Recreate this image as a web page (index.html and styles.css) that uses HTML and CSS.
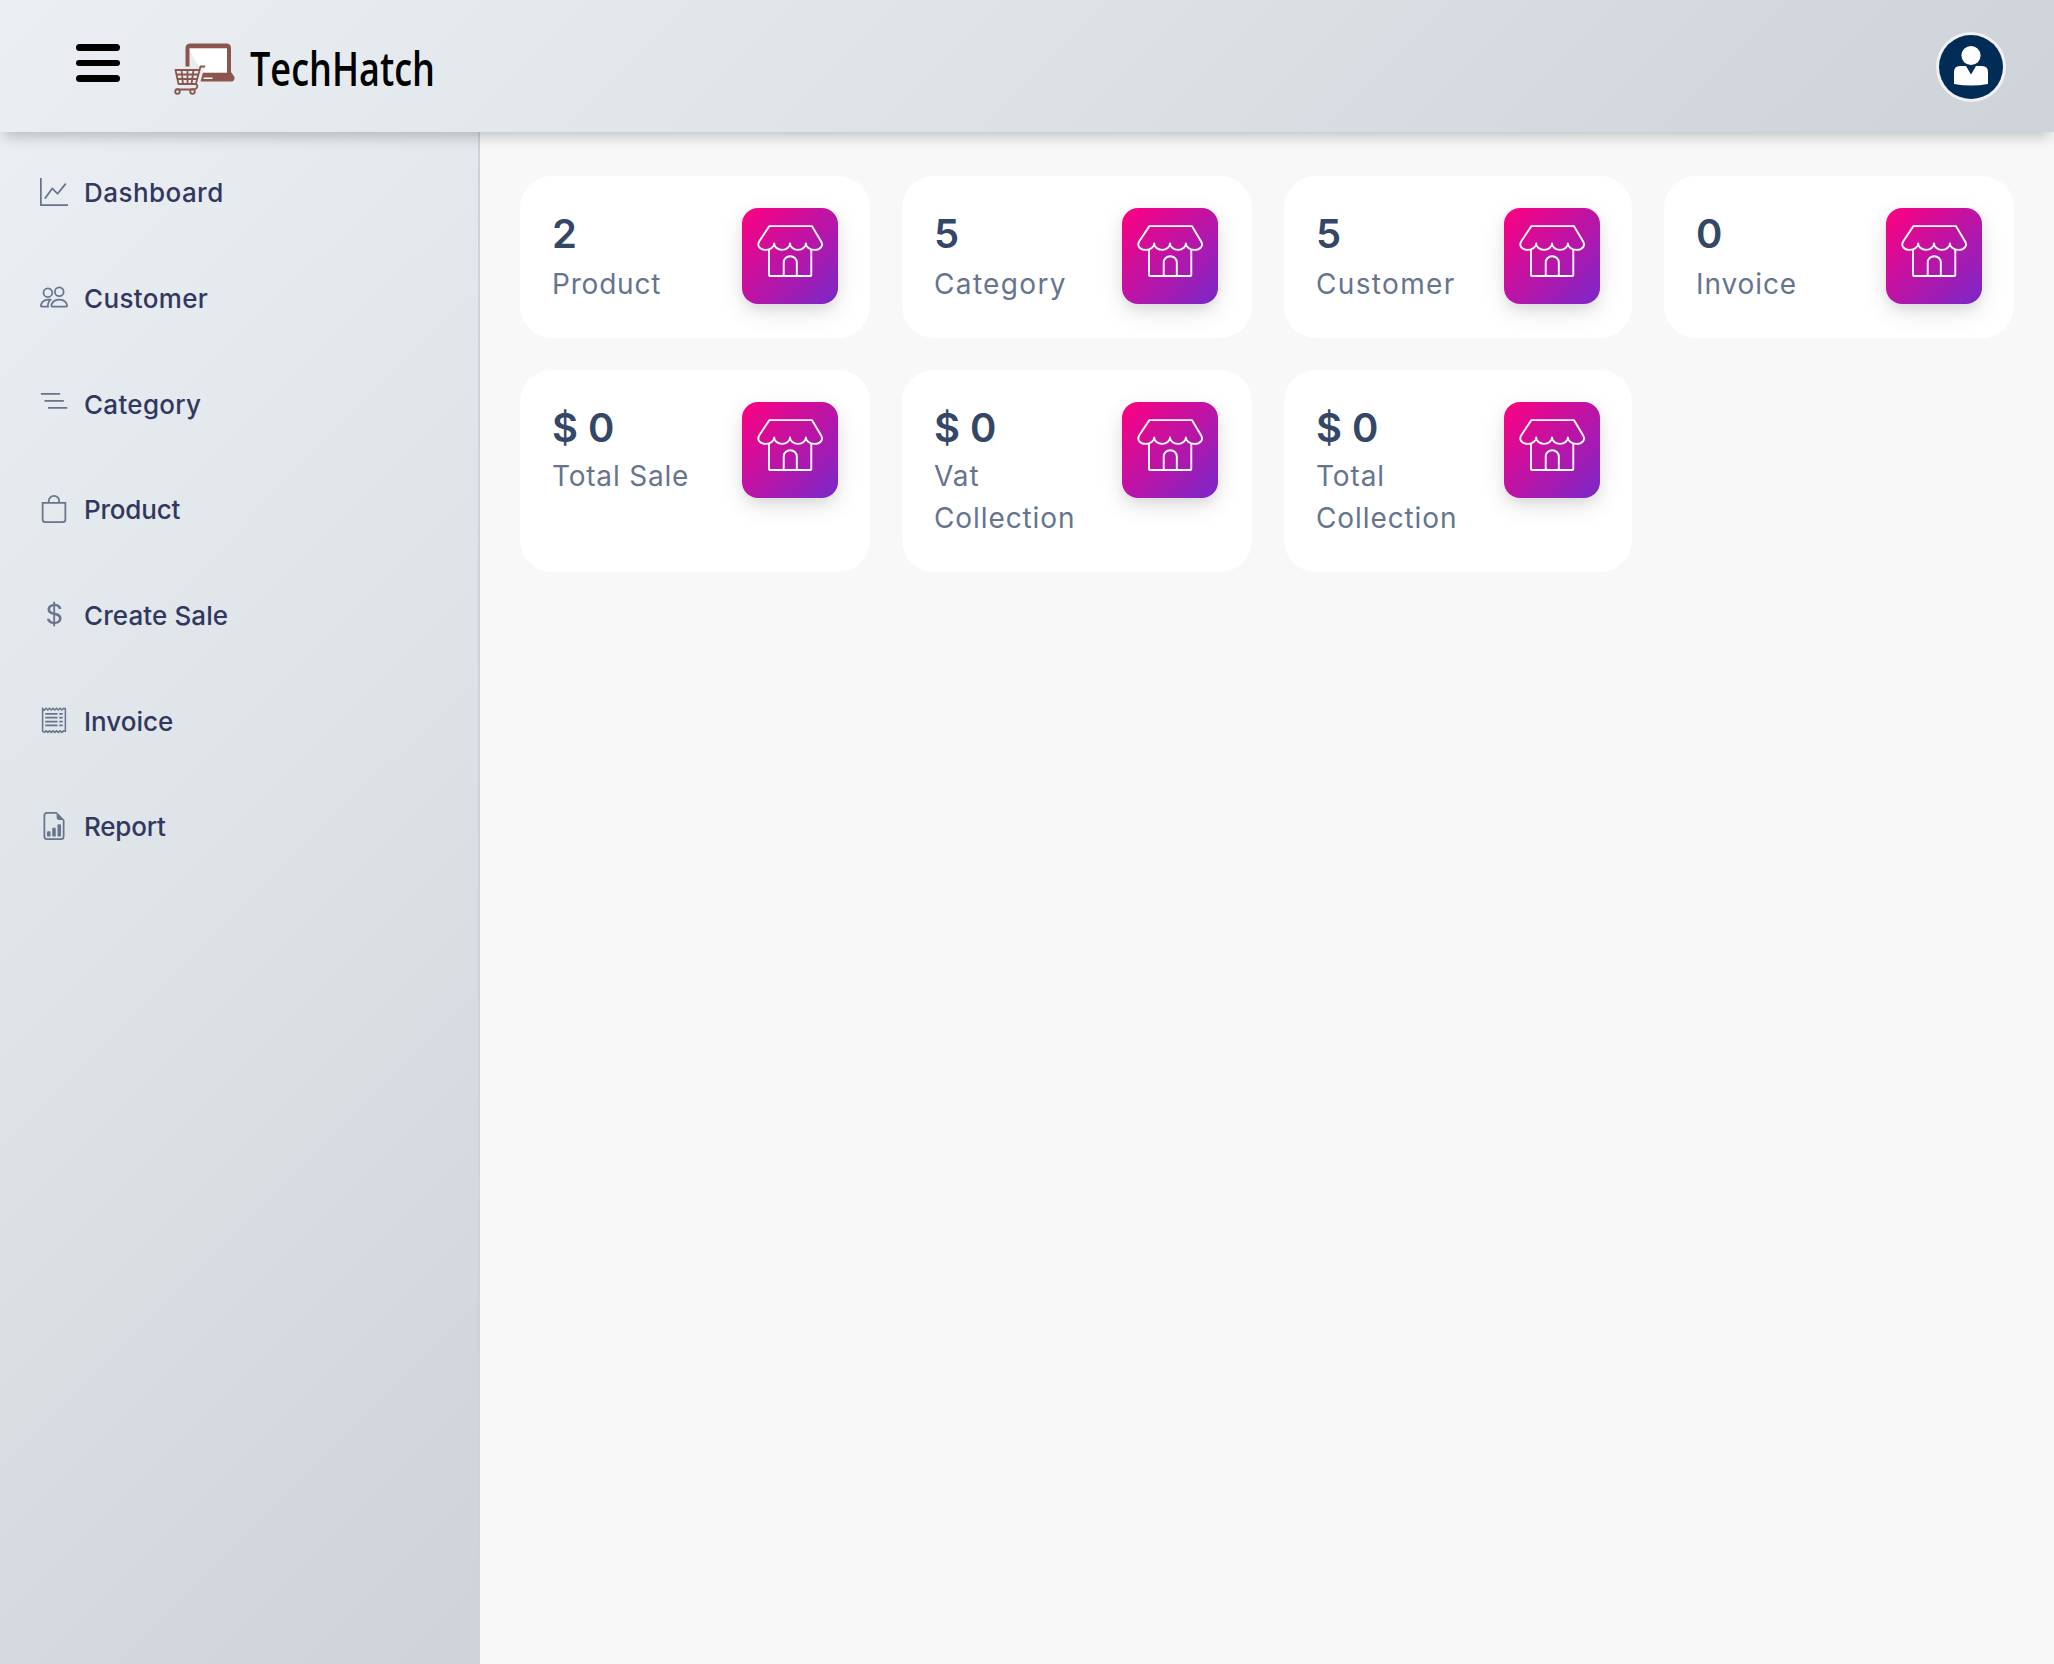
FILE: index.html
```html
<!DOCTYPE html>
<html lang="en">
<head>
<meta charset="utf-8">
<title>TechHatch Dashboard</title>
<link rel="stylesheet" href="styles.css">
</head>
<body>
<svg class="sprite" width="0" height="0" aria-hidden="true">
  <symbol id="shop" viewBox="0 0 96 96">
    <g fill="none" stroke="#fff" stroke-width="1.9" stroke-linejoin="round" stroke-linecap="round">
      <path d="M27.4 18.1H69.9L79 33.2C82 38 78 41.9 72.5 41.9C67 41.9 63.9 38.5 63.9 35.4C63.9 38.5 61 41.9 56 41.9C51 41.9 48 38.5 48 35.4C48 38.5 45 41.9 40 41.9C35 41.9 32.2 38.5 32.2 35.4C32.2 38.5 29 41.9 24 41.9C18 41.9 14.5 38 17.3 33.2Z"/>
      <path d="M27 42V66.9Q27 68 28.1 68H68.2Q69.3 68 69.3 66.9V42M41.7 68V54.5A6.55 6.3 0 0 1 54.8 54.5V68"/>
    </g>
  </symbol>
</svg>
<header class="navbar">
  <button class="menu" aria-label="Menu"><span></span><span></span><span></span></button>
  <svg class="logo" viewBox="0 -20 340 100">
    <path d="M11.500 27.500V9Q11.500 4.500 16.500 4.500H52.500Q57 4.500 57 9V33L60.500 38Q61 42.500 57 42.500H26.500L29 33.500H53V9.500H15.500V27.500Z" fill="#8b564e"/>
    <path d="M15.500 9.500H53V33.500H29L30 28H26Q19 20 15.500 9.500Z" fill="#fff"/>
    <path d="M30 38.500H39L38 40H29.500Z" fill="#fff"/>
    <g fill="none" stroke="#8b564e" stroke-width="1.800" stroke-linecap="round" stroke-linejoin="round">
      <path d="M30.500 27.500H26.500L22 44.500M1.500 31H25.500M1.500 31L4.500 45H22Q24 46 23 48.500Q22 50.500 19 50.500H2.500M3 35.500H24M4 40H23M7.500 31L9 45M13.500 31V45M19.500 31L17.500 45"/>
      <circle cx="3.500" cy="52.500" r="2.300"/><circle cx="18.500" cy="52.500" r="2.300"/>
    </g>
    <text x="76" y="47" textLength="185" lengthAdjust="spacingAndGlyphs" class="logo-text">TechHatch</text>
  </svg>
  <svg class="avatar" viewBox="0 0 70 70">
    <circle cx="35" cy="35" r="35" fill="#f1f1f1"/><circle cx="35" cy="35" r="32" fill="#002c55"/>
    <circle cx="35" cy="23.500" r="9.600" fill="#fff"/>
    <path d="M18 52V40Q18 34 24 34H30L35 42.500L40 34H46Q52 34 52 40V52Q35 55 18 52Z" fill="#fff"/>
  </svg>
</header>
<div class="layout">
  <nav class="sidebar">
    <a class="item"><svg viewBox="0 0 16 16"><path d="M0 0h1v15h15v1H0zm14.800 3.100a.5.5 0 0 1 .1.700l-4.500 5.500a.5.5 0 0 1-.75.040L7.060 6.700l-3.650 5.100a.5.5 0 0 1-.82-.6l4-5.500a.5.5 0 0 1 .76-.06l2.600 2.600 4.150-5.100a.5.5 0 0 1 .7-.04"/></svg><span class="w-dashboard">Dashboard</span></a>
    <a class="item"><svg viewBox="0 0 16 16"><path d="M15 14s1 0 1-1-1-4-5-4-5 3-5 4 1 1 1 1zm-7.978-1L7 12.996c.001-.264.167-1.030.760-1.720C8.312 10.629 9.282 10 11 10c1.717 0 2.687.630 3.240 1.276.593.690.758 1.457.760 1.720l-.008.002-.014.002zM11 7a2 2 0 1 0 0-4 2 2 0 0 0 0 4m3-2a3 3 0 1 1-6 0 3 3 0 0 1 6 0M6.936 9.280a6 6 0 0 0-1.230-.247A7 7 0 0 0 5 9c-4 0-5 3-5 4q0 1 1 1h4.216A2.240 2.240 0 0 1 5 13c0-1.010.377-2.042 1.090-2.904.243-.294.526-.569.846-.816M4.920 10A5.500 5.500 0 0 0 4 13H1c0-.260.164-1.030.760-1.724.545-.636 1.492-1.256 3.160-1.275ZM1.500 5.500a3 3 0 1 1 6 0 3 3 0 0 1-6 0m3-2a2 2 0 1 0 0 4 2 2 0 0 0 0-4"/></svg><span class="w-customer">Customer</span></a>
    <a class="item"><svg viewBox="0 0 16 16"><path d="M.5 2.350h11v1H.5zM2.600 6.350h11v1h-11zM4.600 10.350h11v1h-11z"/></svg><span class="w-category">Category</span></a>
    <a class="item"><svg viewBox="0 0 16 16"><path d="M8 1a2.500 2.500 0 0 1 2.500 2.500V4h-5v-.5A2.500 2.500 0 0 1 8 1m3.500 3v-.5a3.500 3.500 0 1 0-7 0V4H1v10a2 2 0 0 0 2 2h10a2 2 0 0 0 2-2V4zM2 5h12v9a1 1 0 0 1-1 1H3a1 1 0 0 1-1-1z"/></svg><span class="w-product">Product</span></a>
    <a class="item"><svg viewBox="0 0 16 16"><path d="M4 10.781c.148 1.667 1.513 2.850 3.591 3.003V15h1.043v-1.216c2.270-.179 3.678-1.438 3.678-3.300 0-1.590-.947-2.510-2.956-3.028l-.722-.187V3.467c1.122.110 1.879.714 2.070 1.616h1.470c-.166-1.600-1.540-2.748-3.540-2.875V1H7.591v1.233c-1.939.230-3.270 1.472-3.270 3.156 0 1.454.966 2.483 2.661 2.917l.610.162v4.031c-1.149-.170-1.940-.800-2.131-1.718zm3.391-3.836c-1.043-.263-1.600-.825-1.600-1.616 0-.944.704-1.641 1.800-1.828v3.495l-.200-.050zm1.591 1.872c1.287.323 1.852.859 1.852 1.769 0 1.097-.826 1.828-2.200 1.939V8.730z"/></svg><span class="w-create">Create Sale</span></a>
    <a class="item"><svg viewBox="0 0 16 16"><path fill="none" stroke="currentColor" d="M1.500 14.500V1.500l1 .8 1-1 1 1 1-1 1 1 1-1 1 1 1-1 1 1 1-1 1 1 1-1 1 .2V14.500l-1-.3-1 .9-1-.9-1 .9-1-.9-1 .9-1-.9-1 .9-1-.9-1 .9-1-.9-1 .9z" stroke-width=".85"/><path d="M3 4h7v1H3zM3 6.200h7v1H3zM3 8.400h7v1H3zM3 10.500h7v1H3zM11 4h2v1h-2zM11 6.200h2v1h-2zM11 8.400h2v1h-2zM11 10.500h2v1h-2z"/></svg><span class="w-invoice">Invoice</span></a>
    <a class="item"><svg viewBox="0 0 16 16"><path d="M10 13.500a.5.5 0 0 0 .5.5h1a.5.5 0 0 0 .5-.5v-6a.5.5 0 0 0-.5-.5h-1a.5.5 0 0 0-.5.5zm-2.500.5a.5.5 0 0 1-.5-.5v-4a.5.5 0 0 1 .5-.5h1a.5.5 0 0 1 .5.5v4a.5.5 0 0 1-.5.5zm-3 0a.5.5 0 0 1-.5-.5v-2a.5.5 0 0 1 .5-.5h1a.5.5 0 0 1 .5.5v2a.5.5 0 0 1-.5.5z"/><path d="M14 14V4.500L9.500 0H4a2 2 0 0 0-2 2v12a2 2 0 0 0 2 2h8a2 2 0 0 0 2-2M9.500 3A1.500 1.500 0 0 0 11 4.500h2V14a1 1 0 0 1-1 1H4a1 1 0 0 1-1-1V2a1 1 0 0 1 1-1h5.500z"/></svg><span class="w-report">Report</span></a>
  </nav>
  <main class="cards">
    <section class="card"><div><h5>2</h5><p class="c-product">Product</p></div><svg class="badge"><use href="#shop"/></svg></section>
    <section class="card second"><div><h5>5</h5><p class="c-category">Category</p></div><svg class="badge"><use href="#shop"/></svg></section>
    <section class="card"><div><h5>5</h5><p class="c-customer">Customer</p></div><svg class="badge"><use href="#shop"/></svg></section>
    <section class="card"><div><h5>0</h5><p class="c-invoice">Invoice</p></div><svg class="badge"><use href="#shop"/></svg></section>
    <section class="card money"><div><h5>$ 0</h5><p class="c-sale">Total Sale</p></div><svg class="badge"><use href="#shop"/></svg></section>
    <section class="card money second"><div><h5>$ 0</h5><p class="c-collection">Vat<br>Collection</p></div><svg class="badge"><use href="#shop"/></svg></section>
    <section class="card money"><div><h5>$ 0</h5><p class="c-collection">Total<br>Collection</p></div><svg class="badge"><use href="#shop"/></svg></section>
  </main>
</div>
</body>
</html>
```
FILE: styles.css
```css
* { box-sizing: border-box; }
body { margin: 0; height: 1664px; display: flex; flex-direction: column; overflow: hidden; background: #f8f8f8; font-family: Inter, "Liberation Sans", sans-serif; }
.sprite { display: none; }
.navbar, .sidebar { background: linear-gradient(135deg, #ebeff4, #dce2e6 50%, #ced2d9); }
.navbar { height: 132px; flex: none; display: flex; align-items: flex-start; padding: 0 48px 0 76px; position: relative; z-index: 1; box-shadow: 0 8px 14px -4px rgba(0, 0, 0, .24); }
.menu { width: 44px; margin: 44px 0 0; padding: 0; border: 0; background: none; display: flex; flex-direction: column; gap: 9px; }
.menu span { height: 6.600px; border-radius: 4px; background: #000; }
.logo { width: 340px; height: 100px; margin: 19px 0 0 54px; }
.logo-text { font-family: "Open Sans", sans-serif; font-size: 47px; font-weight: 600; fill: #000; }
.avatar { width: 70px; height: 70px; margin: 32px 0 0 auto; }
.layout { flex: 1; display: flex; }
.sidebar { width: 480px; flex: none; border-right: 2px solid #ced3da; padding: 7px 40px; }
.item { height: 105.700px; display: flex; align-items: flex-start; padding-top: 38.500px; gap: 16px; }
.item svg { width: 28px; height: 28px; flex: none; fill: #67748e; color: #67748e; }
.item span { margin-top: -0.200px; font-size: 26px; line-height: 32px; font-weight: 460; color: #32375f; white-space: nowrap; }
.w-dashboard { letter-spacing: .45px; }
.w-customer { letter-spacing: .35px; }
.w-category { letter-spacing: .3px; }
.w-product { letter-spacing: -.2px; }
.w-create { letter-spacing: .1px; }
.w-invoice { letter-spacing: 0; }
.w-report { letter-spacing: -.2px; }
.cards { flex: 1; display: grid; grid-template-columns: 350px 350px 348px 350px; grid-template-rows: 162px 202px; gap: 32px; padding: 44px 40px; }
.card { background: #fff; border-radius: 32px; padding: 32px; display: flex; justify-content: space-between; align-items: flex-start; }
.second { padding-right: 34px; }
.card h5 { margin: 0; padding-top: 1.500px; font-size: 40px; line-height: 48px; font-weight: 600; color: #344767; white-space: nowrap; }
.card p { margin: 5.500px 0 0; font-size: 28px; line-height: 42px; font-weight: 370; color: #67748e; white-space: nowrap; }
.card.money h5 { letter-spacing: -1px; word-spacing: 2px; }
.card.money p { margin-top: 3.500px; }
.c-product { letter-spacing: .8px; }
.c-category { letter-spacing: 1.350px; }
.c-customer { letter-spacing: 1.350px; }
.c-invoice { letter-spacing: .9px; }
.c-sale { letter-spacing: .8px; }
.c-collection { letter-spacing: .9px; }
.badge { width: 96px; height: 96px; flex: none; border-radius: 16px; background: linear-gradient(135deg, #ff0080, #7928ca); box-shadow: 0 8px 24px rgba(0, 0, 0, .11), 0 6px 12px -2px rgba(0, 0, 0, .07); }
```
